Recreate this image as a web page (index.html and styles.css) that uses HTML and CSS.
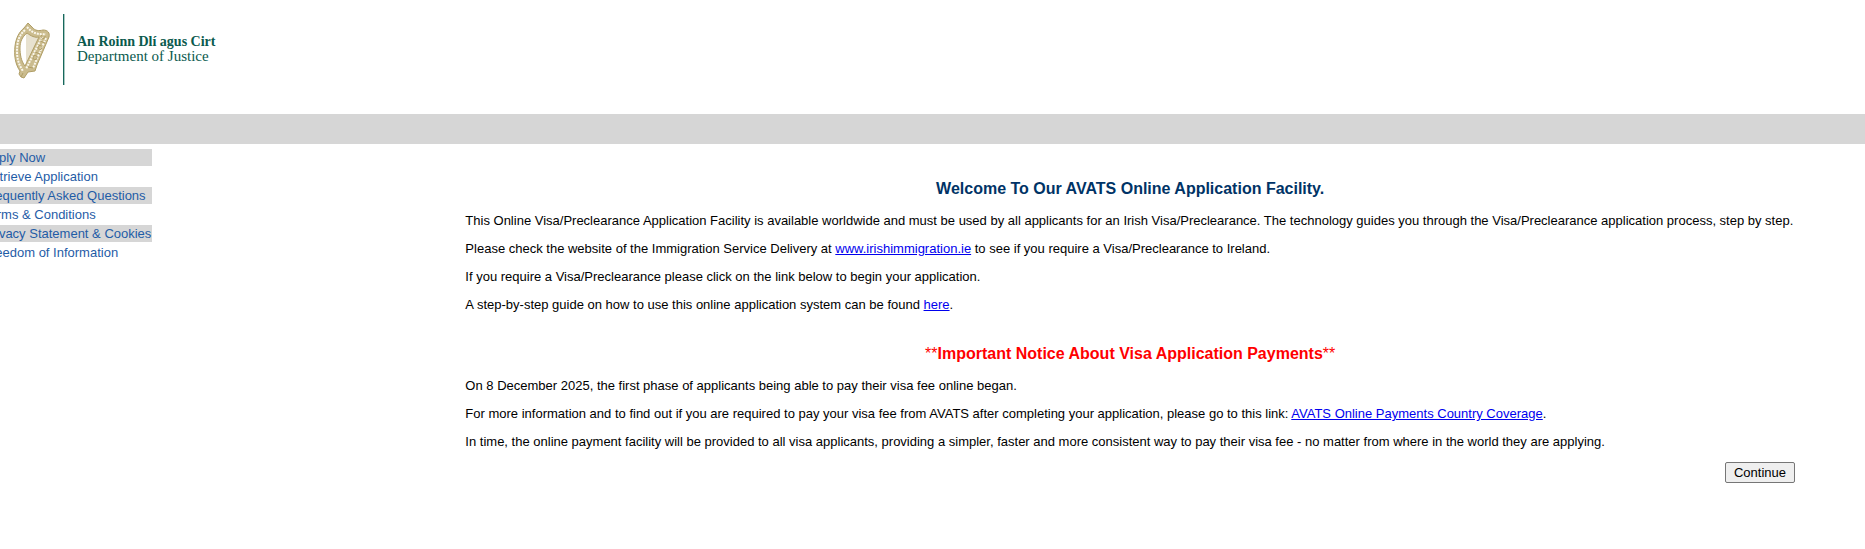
FILE: index.html
```html
<!DOCTYPE html>
<html lang="en">
<head>
<meta charset="utf-8">
<title>AVATS Online Application Facility</title>
<link rel="stylesheet" href="styles.css">
</head>
<body>
<header class="masthead">
  <svg class="harp" viewBox="0 0 38 60" aria-hidden="true">
    <path class="strings" d="M14 13v28M16 13v24M18 14v20M20 15v16M22 15v12M24 16v7"/>
    <path class="frame" fill-rule="evenodd" d="M15 2l-4 5C6 11 3 17 2 25c-1 9 0 18 5 25l-1 3 2 3 3 1 4-6 7-1 2-6 12-28c1-4-1-7-6-7-4 1-8 1-11-3zM14 12c-5 4-7 9-7 15s1 13 5 18l14-29c-4 1-8-1-12-4z"/>
    <path class="beads" d="M12 9C5 15 4 23 4 30c0 8 2 14 6 20"/>
    <path class="beads" d="M14 6c5 6 11 8 19 7"/>
    <path class="beads" d="M29 16L13 48M33 17L20 47"/>
    <path class="knots" d="M29 14a2 2 0 1 0 3 1M25 26a2 2 0 1 0 4 1 2 2 0 0 0-4-1M20 36a2 2 0 1 0 4 1 2 2 0 0 0-4-1M15 46l5 1M27 20l5 2M22 31l5 2M10 52l-2 4"/>
  </svg>
  <span class="rule"></span>
  <div class="department">
    <strong>An Roinn Dlí agus Cirt</strong>
    <span>Department of Justice</span>
  </div>
</header>
<div class="banner"></div>
<div class="page">
  <nav class="menu">
    <a href="#apply">Apply Now</a>
    <a href="#retrieve">Retrieve Application</a>
    <a href="#faq">Frequently Asked Questions</a>
    <a href="#terms">Terms &amp; Conditions</a>
    <a href="#privacy">Privacy Statement &amp; Cookies</a>
    <a href="#foi">Freedom of Information</a>
  </nav>
  <main class="content">
    <h1 class="title">Welcome To Our AVATS Online Application Facility.</h1>
    <p>This Online Visa/Preclearance Application Facility is available worldwide and must be used by all applicants for an Irish Visa/Preclearance. The technology guides you through the Visa/Preclearance application process, step by step.</p>
    <p>Please check the website of the Immigration Service Delivery at <a href="#isd">www.irishimmigration.ie</a> to see if you require a Visa/Preclearance to Ireland.</p>
    <p>If you require a Visa/Preclearance please click on the link below to begin your application.</p>
    <p>A step-by-step guide on how to use this online application system can be found <a href="#guide">here</a>.</p>
    <h2 class="title notice"><span class="stars">**</span>Important Notice About Visa Application Payments<span class="stars">**</span></h2>
    <p>On 8 December 2025, the first phase of applicants being able to pay their visa fee online began.</p>
    <p>For more information and to find out if you are required to pay your visa fee from AVATS after completing your application, please go to this link: <a href="#coverage">AVATS Online Payments Country Coverage</a>.</p>
    <p>In time, the online payment facility will be provided to all visa applicants, providing a simpler, faster and more consistent way to pay their visa fee - no matter from where in the world they are applying.</p>
    <div class="actions"><button type="button" class="continue">Continue</button></div>
  </main>
</div>
</body>
</html>
```
FILE: styles.css
```css
body {
  margin: 0;
  background: #fff;
  color: #000;
  font: 13px/15px "Liberation Sans", Arial, sans-serif;
  overflow-x: hidden;
}

.masthead {
  display: flex;
  align-items: flex-start;
  padding: 14px 13px 29px;
}

.harp {
  width: 38px;
  height: 60px;
  margin-top: 7px;
  fill: none;
}

.strings { stroke: #d0c49f; stroke-width: 1; }
.frame { fill: #cbbc8e; stroke: #b09e66; stroke-width: 1; }
.beads { stroke: #faf7ec; stroke-width: 2; stroke-dasharray: 2 1; }
.knots { stroke: #b09e66; stroke-width: 1; }

.rule {
  width: 2px;
  height: 71px;
  margin-left: 12px;
  background: linear-gradient(to right, #17685c 50%, #a9c8c3 50%);
}

.department {
  display: flex;
  flex-direction: column;
  margin: 20px 0 0 12px;
  color: #0b5a4e;
  font: 15px/15px "Liberation Serif", "Times New Roman", serif;
  white-space: nowrap;
}

.department strong { font-size: 14px; }

.banner {
  height: 30px;
  background: #d6d6d6;
}

.page {
  display: flex;
  align-items: flex-start;
}

.menu {
  display: flex;
  flex: none;
  flex-direction: column;
  gap: 2px;
  margin: 5px 0 0 -17px;
}

.menu a {
  padding-right: 1px;
  color: #1f5ca6;
  line-height: 17px;
  text-decoration: none;
  white-space: nowrap;
}

.menu a:nth-child(odd) { background: #d6d6d6; }

.content {
  flex: 1;
  padding: 36px 70px 24px 313px;
}

.content a { color: #00e; }
.content p { margin: 0 0 13px; }

.title {
  margin: 0 0 15px;
  color: #036;
  font-size: 16px;
  line-height: 18px;
  text-align: center;
}

.notice {
  margin-top: 33px;
  color: #f00;
}

.stars { font-weight: normal; }

.actions {
  display: flex;
  justify-content: flex-end;
}

.continue {
  padding: 1px 8px;
  border: 1px solid #767676;
  border-radius: 2px;
  background: #efefef;
  color: #000;
  font: 13px/17px "Liberation Sans", Arial, sans-serif;
}
```
